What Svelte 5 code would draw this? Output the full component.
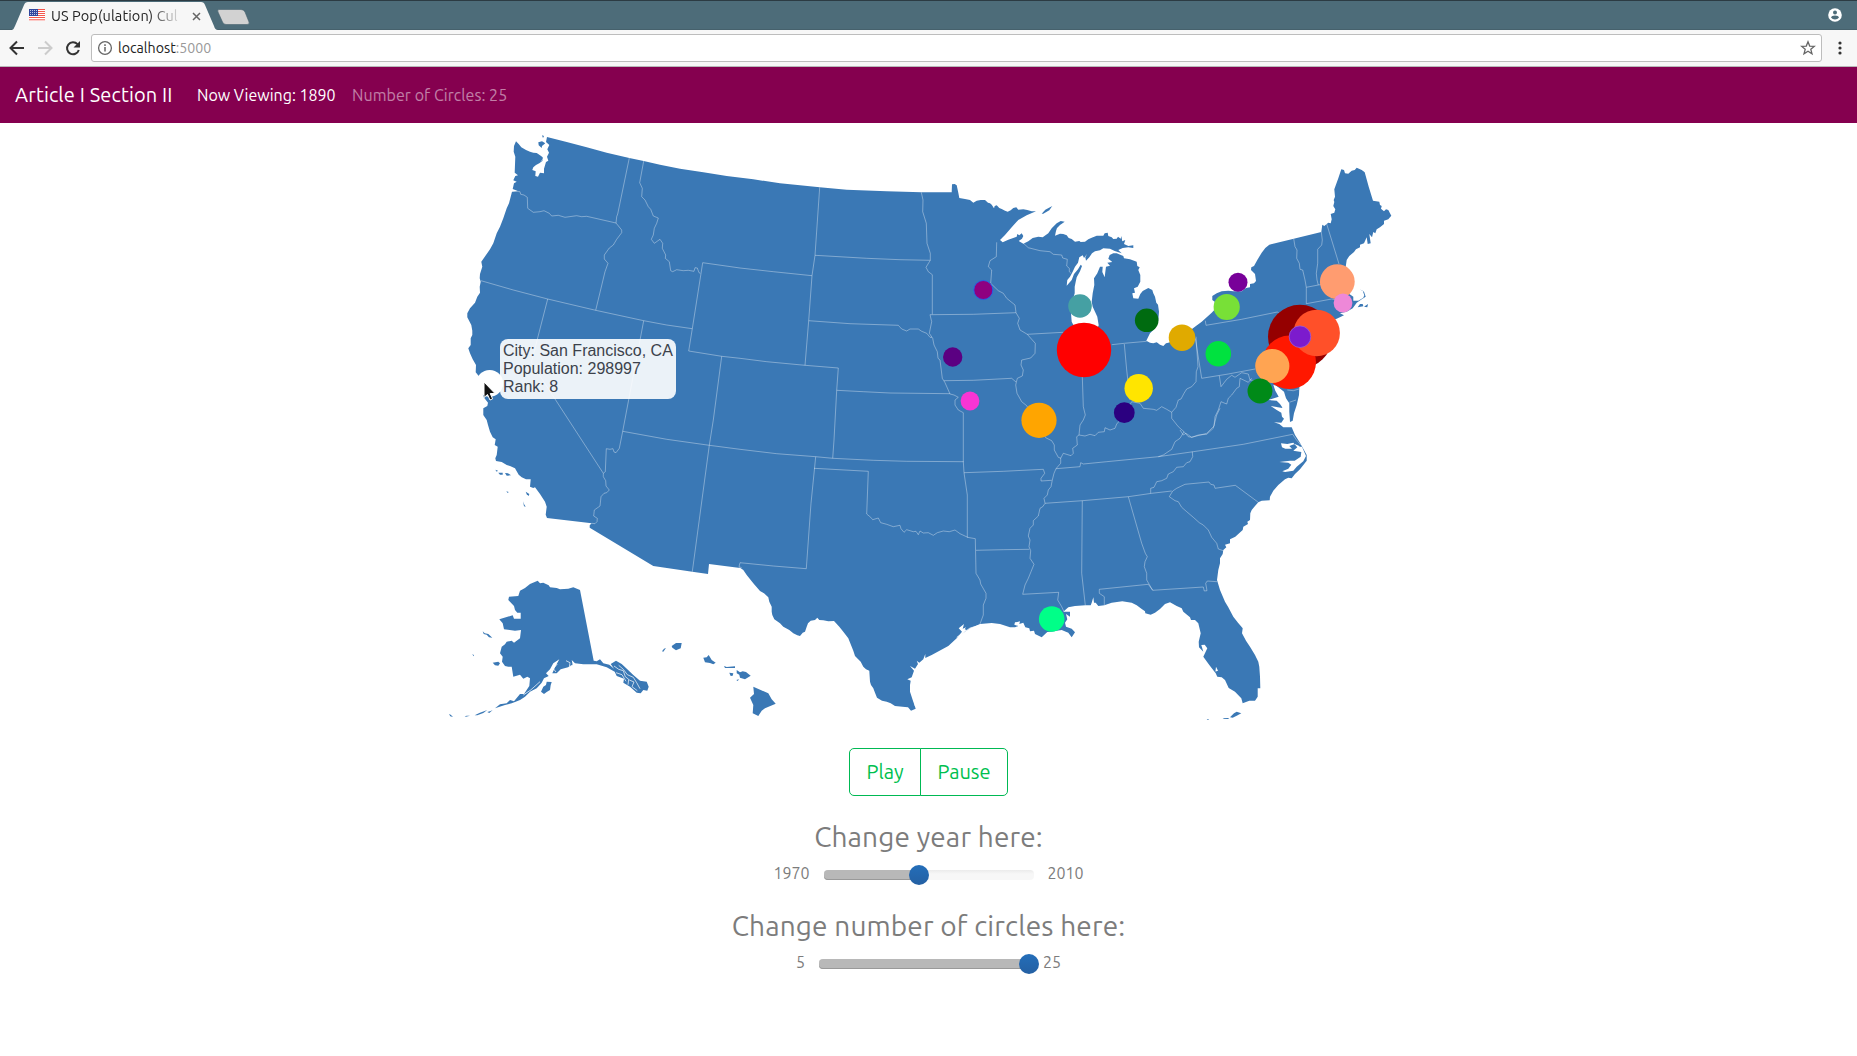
<script>
  // Each survey sheet has its own origin; three sheet units make one map unit.
  const sheets = {
    A: [440, 120],
    C: [440, 380],
    D: [740, 140],
    E: [740, 430],
    F: [960, 170],
    G: [1180, 150],
    H: [960, 430],
    K: [540, 640]
  };

  // "A x,y x,y D x,y ..." -> polyline path in map units
  function trace(text) {
    let origin = sheets.A;
    let d = '';
    for (const token of text.trim().split(/\s+/)) {
      if (sheets[token]) {
        origin = sheets[token];
        continue;
      }
      const [x, y] = token.split(',').map(Number);
      d += (d ? 'L' : 'M') + (origin[0] + x / 3).toFixed(1) + ' ' + (origin[1] + y / 3).toFixed(1);
    }
    return d;
  }

  const mainland = `A 228,64 236,72 244,82 258,90 270,95 280,98 290,99 300,106 308,112 308,122 298,130 288,135 280,142 277,150
    287,154 286,168 294,170 300,158 312,160 312,146 318,126 325,122 321,110 327,98 322,88 328,75 318,66 321,51
    380,66 440,82 500,98 568,114 611,123 660,134 720,146 790,157 860,168 940,178
    D 120,130 180,136 239,142 320,149 440,154 544,157 635,157 636,133 644,132 650,136 655,158 658,174 675,177 690,180 700,188
    710,182 722,180 735,180 744,188 750,190 755,194 762,205 764,198 770,196 778,204 785,207 795,212 803,215 812,211 820,204
    829,202 835,209 850,208 862,210 875,214 888,214 860,226 835,240 815,262 795,285 780,300 788,307 805,299 830,290 832,282
    838,286 845,280 850,288 846,296 836,303 850,311 865,304 878,294 895,290
    F 248,202 265,190 275,175 290,160 302,153 314,155 300,165 291,174 288,183 285,197 300,191 310,192 320,196 326,204 335,207
    345,215 358,213 362,216 375,215 385,208 395,203 410,197 430,197 434,190 443,188 445,198 455,202 460,207 470,206 474,200
    482,206 484,198 487,214 496,210 492,222 505,228 520,226 520,234 505,232 488,234 475,240 485,250 464,243 450,236 430,235
    420,241 405,244 396,250 388,262 378,272 376,262 381,252 372,264 368,256 358,262 354,278 345,290 338,305 330,320 322,330
    320,347 335,330 342,312 354,298 362,284 366,288 360,304 350,322 347,335 344,350 344,370 335,400 333,430 335,455 345,475
    370,485 410,480 416,466 412,440 405,425 398,410 395,395 398,370 403,345 402,325 412,310 420,290 428,290 427,306 434,322
    436,306 438,290 450,287 442,278 457,276 445,266 449,255 460,250 470,250 490,258 492,265 510,268 530,275 532,288 539,292
    535,300 541,315 541,335 533,350 522,355 525,368 517,370 520,385 535,386 541,372 548,363 565,354 577,360 580,370 585,380
    589,398 594,404 597,425 595,450 585,475 570,490 559,512 570,518 580,520 590,517 600,524 610,528 618,520 625,518 650,510
    680,490 700,474 725,455 755,428
    G 105,478 104,455 97,450 97,438 110,430 125,424 145,422 160,424 185,424 198,414 210,412 210,402 222,400 228,393 225,372
    213,360 214,352 222,348 232,330 245,308 256,294 268,284 341,266 424,246 427,224 433,228 440,222 445,218 452,220 455,208
    452,192 463,188 466,178 460,168 463,156 461,150 465,140 463,118 475,85 484,58 492,60 495,70 505,71 515,62 524,60 530,53
    545,60 554,67 566,110 579,152 598,155 600,165 605,168 603,176 612,184 618,178 625,180 634,197 625,208 612,212 612,222
    600,232 590,238 586,250 580,246 576,262 568,252 572,280 563,282 560,262 552,280 540,284 540,292 528,298 522,306 508,318
    500,330 497,350 510,380 515,400 505,430 520,440 520,452 535,452 550,443 553,436 548,422 538,418 552,425 557,440 545,448
    530,458 518,475 500,485 480,490 492,496 470,506 440,516 400,560 390,620 360,680 358,715 357,735 350,765 342,790
    338,812 330,816 328,785 328,760 318,745 312,725 295,712 280,704 286,722 296,740 264,750 290,752 300,762 308,774 272,768
    290,780 304,788 306,800 312,806 304,818 282,817 298,822 310,832 335,832 345,855 358,875 372,900
    H 1040,75 1040,92 1020,118 1005,132 995,145 985,143 975,148 955,165 940,182 930,200 929,211 905,212 895,217 885,228
    875,240 871,250 870,270 862,275 864,282 850,290 848,300 835,312 826,320 810,328 810,340 795,344 799,352 790,360 788,372
    780,385 780,400 775,420 771,450 780,480 795,515 805,532 820,560 834,578 848,595 846,610 858,632 870,650 885,675 895,695
    898,710 900,740 901,775 893,775 893,800 885,812 868,812 848,820 844,805 825,785 806,774 795,750 785,742 772,740 765,725 774,722
    768,710 766,728 748,705 730,680 742,655 734,644 724,645 730,665 717,652 716,635 722,610 715,580 705,570 693,570 690,562
    670,545 665,535 650,528 630,517 615,522 600,537 585,548 572,554 556,550 555,544 545,537 530,526 515,518 487,514 455,518
    433,526 415,528 407,518 402,518 400,502 395,518 392,526 376,526 345,528 325,532 310,545 330,545 330,560 318,552 322,568
    315,578 318,590 335,596 345,607 335,622 325,608 305,600 290,602 275,605 262,606 245,622 225,612 222,602 210,604 208,595
    196,592 190,578 178,582 180,574 172,576 165,577 163,584 175,588 165,592 150,592 120,582 95,579 60,582 30,595 5,612
    E 680,600 674,598 678,592 668,596 672,582 656,595 666,605 650,625 625,648 575,675 556,684 556,672 550,688 538,698 530,692
    534,702 525,716 510,708 522,722 515,742 502,748 512,752 510,765 510,785 518,810 527,836 513,842 504,832 495,831 465,828
    452,820 440,815 426,812 411,803 405,788 400,775 393,765 390,755 388,722 378,718 370,710 362,695 345,678 340,662 335,650
    325,625 310,605 298,590 282,573 265,574 250,571 238,570 232,563 225,570 212,572 204,580 200,590 195,605 188,608 180,618
    172,616 160,610 148,600 130,590 120,580 103,568 97,555 95,545 95,530 88,515 85,502 72,490 60,483 40,460 20,435 10,420 0,413
    C 895,563 807,552 804,582 757,575 640,558 449,443 449,436 455,430 321,414 317,404 320,380 315,365 300,342 285,322 280,324
    270,320 272,298 258,298 245,292 236,284 225,265 210,258 200,255 185,246 168,243 166,235 170,225 173,200 164,195 167,178
    158,172 150,155 144,135 140,120 130,105 130,85 142,78 144,68 130,50
    A 118,770 107,757 108,735 98,718 90,700 85,685 92,675 92,655 97,645 97,632 94,615 82,592 82,580 90,565 105,548 112,530
    120,518 119,500 122,485 119,475 120,462 127,440 124,425 136,408 150,388 160,370 170,340 180,320 190,295 200,265 207,250
    216,215 233,213 218,207 222,190 230,185 220,181 222,176 226,168 234,166 224,158 226,110 221,95 222,78 228,64`;

  const islands = [
    // Alaska
    `C 293,602 300,610 310,608 326,616 330,622 350,624 360,628 385,626 400,622 420,630 461,842 470,844 480,838 490,850
     508,854 522,866 512,852 528,842 545,852 562,868 580,885 600,902 620,905 626,920 622,932 610,930 602,940 590,938
     570,920 550,908 552,896 530,888 524,875 500,862 470,853 430,853 405,850 395,840 398,855 384,862 362,868 350,880
     337,880 345,862 358,838 340,850 330,868 318,880 326,888 312,895 305,908 290,925 270,935 255,950 240,960 225,966
     215,970 195,975 165,985 180,973 200,970 210,960 222,964 240,942 252,942 268,918 270,895 262,890 250,896 240,884
     220,890 215,860 205,860 195,858 186,845 188,830 180,820 185,800 195,793 200,785 215,782 222,788 240,775 243,750
     225,752 192,748 188,730 178,718 218,706 222,716 242,716 242,698 232,698 225,690 222,678 205,660 207,650 235,648
     240,632 255,624 270,612`,
    'C 303,935 310,920 318,915 320,905 335,906 332,915 330,930 320,936 312,942',
    'C 104,1006 118,999 142,990 130,999 112,1006',
    'C 142,996 152,993 158,990 148,999',
    'C 27,1002 32,1004 39,1011 31,1009',
    'C 74,1009 80,1007 90,1007 78,1010',
    'C 128,754 134,760 145,762 157,773 147,772 140,764 131,762',
    'C 158,848 175,845 180,850 175,857 165,856',
    'C 96,823 102,825 102,829',
    // Hawaii
    'C 695,798 708,789 725,789 722,805 708,811 697,803',
    'C 666,814 672,806 678,804 670,815',
    'C 790,833 800,832 806,825 815,840 827,848 820,853 810,849 795,847',
    'C 852,858 860,861 885,859 885,864 855,864',
    'C 868,878 880,880 878,887 872,888',
    'C 890,870 900,877 908,874 918,876 932,887 915,898 900,893 898,884 890,880',
    'C 889,900 897,898 893,903',
    'E 40,770 62,780 85,790 95,808 107,821 75,835 65,842 55,858 38,850 40,825 30,803 42,792',
    // Channel Islands
    'C 166,269 174,272 170,275',
    'C 175,278 188,278 188,284 180,284',
    'C 195,279 204,280 213,286 200,287',
    'C 257,335 268,342 266,348 260,343',
    'C 199,334 206,336 203,339',
    'C 249,364 252,372 257,380 252,379',
    // Puget Sound, Isle Royale, Keys, New England
    'A 295,67 306,64 316,70 306,78 305,84 296,76',
    'A 306,46 312,48 309,54',
    'F 245,131 256,119 277,108 268,121 250,131',
    'H 810,862 822,850 830,845 844,850 830,857 818,863',
    'H 788,865 804,864 808,867 792,867',
    'H 740,867 747,867 744,870',
    'G 533,472 540,462 548,462 550,469',
    'G 552,470 564,462 562,472'
  ];

  const inlets = [
    'H 963,40 966,52 976,56 996,56 988,48 1004,42 1018,48 1024,62 1018,50 1026,50 1038,78 1030,94 1010,110 1000,122 975,126 967,124 985,116 994,104 985,98 958,96 990,92 1004,92 1022,80 1024,66 1000,62 1012,52 1000,38 982,42',
    'G 283,704 290,722 300,740 312,748 305,730 292,710'
  ];

  const spits = [
    'E 518,745 514,775 520,800 526,828',
    'E 650,622 690,594 720,586',
    'K 222,78 236,88 250,92 256,110 266,118 264,134',
    'K 236,76 250,88 262,104 280,112 290,128 300,146',
    'K 228,98 246,104 258,124',
    'K 268,120 282,126 276,140 292,152',
    'K 78,62 90,68 88,80 100,74',
    'K 48,96 40,86 52,72',
    'C 250,945 272,930 300,905',
    'A 316,66 318,82 310,94 318,108 304,124',
    'A 308,90 296,86'
  ];

  const borders = [
    'A 216,213 240,215 242,223 252,225 262,232 263,265 280,277 300,275 312,272 328,280 335,288 355,286 375,292 410,287 425,290 440,289 528,309',
    'A 568,114 533,282 530,290 528,309 545,330 545,338 530,358 520,375 508,384 493,405 493,417 504,430 495,455 467,571',
    'A 611,123 599,188 607,205 605,230 615,240 625,260 632,268 640,288 655,294 650,310 643,325 640,345 634,358 643,370 660,358 668,370 667,385 677,405 676,415 688,425 692,452 698,455 710,449 730,452 745,451 762,454 765,443 772,444 777,458 781,460',
    'A 757,626 788,428 D 0,384 100,395 216,407',
    'A 123,482 220,510 323,537 467,571 611,602 680,615 757,626 746,693 845,709 D 0,655 80,665 195,676 295,684',
    'A 323,537 274,728 C 345,57 490,280',
    'A 611,602 C 548,154 538,205 528,218 522,216 519,206 510,208 499,206 496,275 490,280 490,290 497,302 498,318 508,330 500,338 492,340 483,350 480,378 463,390 461,408 472,415 471,425 465,431 455,430',
    'A 845,709 820,900 C 808,196 757,575',
    'C 548,154 680,178 808,196 E 0,58 110,71 227,80 278,85 400,91 500,94 670,95',
    'C 905,563 897,560 900,548 E 100,408 199,416 213,220 227,80',
    'D 239,142 225,346 216,407 206,542 195,676',
    'D 225,346 380,355 480,359 571,361',
    'D 206,542 330,551 475,556 485,567 500,573 510,567 535,567 545,574 560,580 570,592 576,592',
    'D 544,157 549,180 548,215 559,250 561,310 571,340 571,361 558,382 565,395 577,404 577,523',
    'D 570,524 700,523 828,518',
    'D 570,524 575,545 568,580 578,595 582,615 592,635 594,655 600,660 607,715 615,728 630,762 642,765 655,772 645,780 645,795 655,810 670,818 670,900 E 670,95',
    'D 290,751 370,755 450,759 630,761',
    'D 295,684 290,751 282,900 E 278,85',
    'D 612,722 700,721 815,715 828,726',
    'D 770,307 769,350 750,362 745,380 755,390 752,430 775,452 790,460 800,475 825,495 828,518 838,535 833,550 840,570 862,583 875,598 886,610 885,640 872,654 845,660 843,675 850,690 847,708 832,715 827,735 831,760 845,785 F 200,707 257,803 275,812 283,825 283,840 295,862 303,865',
    'D 862,583 F 310,487',
    'F 185,215 205,233 240,242 270,245 280,253 305,255 308,264 322,268 320,288 328,295 328,305 333,310',
    'F 367,620 370,710 376,735 370,750 360,765 357,795 350,800 352,825 338,835 340,850 333,857 310,850 302,865',
    'F 357,795 375,798 390,793 405,797 415,787 433,785 435,773 450,780 465,775 470,762 490,740 515,695 540,700 550,715 580,718 590,721 605,710 620,718 635,727 648,712 655,690 663,687 672,670 680,657 695,650 708,635 709,605 714,590 708,500',
    'F 493,522 500,600 510,690',
    'F 455,524 493,520 560,514',
    'G 46,565 65,685 145,672 225,657',
    'F 635,727 635,745 655,770 672,785 660,805 645,815 635,838 610,855 595,860',
    'F 672,785 685,800 695,802 715,795 740,793 760,775 770,735 780,715',
    'G 0,840 10,855 18,850 35,862 80,850 102,828 105,800 115,780 123,755 140,762 145,745 155,735 170,715 178,710 180,685 205,697 215,685',
    'G 118,677 123,710 140,688 155,676 165,682 185,668 205,672 210,690 225,692',
    'G 76,512 78,526 185,508 292,486 300,492',
    'G 341,266 345,290 351,300 350,325 358,340 360,358 368,360 375,390 379,412 379,461 455,447 470,450',
    'G 379,412 420,404 435,398',
    'G 424,246 427,270 425,285 413,298 413,340 409,370 411,390 415,405',
    'G 440,222 477,342',
    'G 322,720 340,722 357,717',
    'G 328,757 348,750',
    'H 288,116 360,110 362,98 370,102 440,95 595,80 700,65 850,43 998,13 1008,28 1022,45',
    'H 255,220 367,212 505,200 575,190 635,183',
    'H 697,65 698,80 690,95 680,98 670,110 650,112 640,125 625,132 620,145 605,152 590,155 582,172 572,175 572,190',
    'H 638,183 650,175 675,163 747,156 752,163 762,165 765,175 826,166 895,217',
    'H 638,183 628,200 645,212 655,215 665,232 680,245 700,262 718,278 730,285 745,300 755,322 770,340 775,357 790,362',
    'H 505,200 525,270 545,340 556,370 562,380 555,395 553,410 560,430 560,450 578,481',
    'H 433,526 433,500 418,490 418,478 565,463 578,481 730,471 733,483 741,482 737,460 742,453 771,455',
    'H 367,212 365,430 376,526',
    'H 312,545 305,530 293,510 296,487 188,493 195,465 205,445 213,425 222,403 210,385 212,362 207,350 210,330 205,318 210,295 220,285 220,272 235,258 240,235 248,230 255,220 252,205 262,195 265,180 273,170 277,150 282,130 288,116 302,100 302,85',
    'H 12,128 130,124 250,118 254,130 243,145 243,153 275,151',
    'H 48,361 130,359 208,358',
    'H 10,94 12,128 22,195 22,322 46,326 48,430 60,450 62,462 78,490 78,505 70,525 70,555 60,582',
    'E 222,115 385,124 380,252 392,262 398,269 415,264 422,278 440,283 460,290 480,286 483,296 492,307 500,299 520,305 528,304 535,314 540,303 550,309 565,308 580,316 592,308 610,303 628,305 645,300 660,311 683,322'
  ];

  const cities = [
    [1300, 336.7, 32, '#950000'],
    [1084, 350, 27.2, '#ff0000'],
    [1289.3, 362.3, 26.7, '#ff1800'],
    [1316.7, 333, 23.2, '#ff5029'],
    [1039, 420.3, 17.6, '#ffa500'],
    [1337.3, 281.7, 17.4, '#ff9c70'],
    [1272.3, 366, 17.1, '#ffa452'],
    [489.7, 383.3, 13.4, '#ffffff'],
    [1138.7, 388.3, 14.2, '#ffe500'],
    [1182, 337.7, 13.3, '#e0aa00'],
    [1226.7, 307, 13.1, '#78e037'],
    [1051.7, 619, 12.8, '#00ff88'],
    [1218.3, 353.7, 12.8, '#00e23f'],
    [1260, 391, 12.5, '#008a18'],
    [1146.7, 320.3, 11.8, '#006b10'],
    [1080, 306, 11.8, '#45a0a3'],
    [1300, 336.7, 10.8, '#7c1bcd', '#9a5fd8'],
    [983.3, 290, 9.5, '#8e0080', '#1c63f5'],
    [1124.3, 412.7, 10.4, '#2b0080'],
    [952.7, 357, 9.7, '#5b0082'],
    [1238, 282.3, 9.5, '#780099'],
    [970, 401, 9.4, '#f835d4'],
    [1343, 303, 9.4, '#ee88d8']
  ];

  const sliders = [
    { title: 'Change year here:', low: '1970', high: '2010', fill: 45.5, kind: 'year' },
    { title: 'Change number of circles here:', low: '5', high: '25', fill: 100, kind: 'count' }
  ];
</script>

<div class="window">
  <header class="tabs">
    <div class="tab">
      <svg class="tab-shape" width="206" height="28" viewBox="0 0 206 28"><path d="M0 28Q2 27 3 24L12 3Q13 0 16 0H189Q192 0 193 3L202 24Q203 28 206 28Z" fill="#f7f7f7" /></svg>
      <svg class="flag" width="16" height="12" viewBox="0 0 16 12">
        <path d="M0 0H16V12H0Z" fill="#fff" />
        <path d="M0 .5H16M0 2.5H16M0 4.5H16M0 6.5H16M0 8.5H16M0 10.8H16" stroke="#f4564c" stroke-width="1" />
        <path d="M0 0H9V7H0Z" fill="#31479e" />
        <path d="M1 1.5H9M1 3.5H9M1 5.5H9" stroke="#dfe4f6" stroke-width=".8" stroke-dasharray="1 1" />
      </svg>
      <span class="tab-title">US Pop(ulation) Cul</span>
      <svg class="close" width="9" height="9" viewBox="0 0 9 9"><path d="M1 1L8 8M8 1L1 8" stroke="#666" stroke-width="1.5" /></svg>
    </div>
    <svg class="new-tab" width="34" height="16" viewBox="0 0 34 16"><path d="M2 .5H24Q27 .5 28 3L32 13Q33 15.500 30 15.500H9Q6.500 15.500 5.500 13L1 3Q0 .5 2 .5Z" fill="#d2d2d2" stroke="#46616d" stroke-width=".6" /></svg>
    <svg class="account" width="14" height="14" viewBox="0 0 14 14">
      <circle cx="7" cy="7" r="6.800" fill="#fff" />
      <circle cx="7" cy="4.400" r="2" fill="#4d6c79" />
      <path d="M3 9.600Q3.500 7.600 7 7.600T11 9.600Q9.500 11.600 7 11.600T3 9.600Z" fill="#4d6c79" />
    </svg>
  </header>

  <div class="toolbar">
    <svg class="nav-icons" width="74" height="18" viewBox="0 0 74 18" fill="none">
      <path d="M17 9H4M10 2.500L3.500 9L10 15.500" stroke="#333" stroke-width="2" />
      <path d="M31 9H44M38 2.500L44.500 9L38 15.500" stroke="#ccc" stroke-width="2" />
      <path d="M70.500 5.200A6 6 0 1 0 71.800 11" stroke="#333" stroke-width="2" />
      <path d="M73 2V8.500H66.500Z" fill="#333" />
    </svg>
    <div class="omnibox">
      <svg width="16" height="16" viewBox="0 0 16 16" fill="none"><circle cx="8" cy="8" r="6.400" stroke="#666" stroke-width="1.300" /><path d="M8 7V11.500M8 4.300V5.900" stroke="#666" stroke-width="1.500" /></svg>
      <span class="url">localhost<i>:5000</i></span>
      <svg class="star" width="16" height="16" viewBox="0 0 16 16"><path d="M8 1.800L9.700 6.100L14.300 6.400L10.800 9.300L12 13.800L8 11.300L4 13.800L5.200 9.300L1.700 6.400L6.300 6.100Z" fill="none" stroke="#666" stroke-width="1.300" /></svg>
    </div>
    <svg class="dots" width="4" height="14" viewBox="0 0 4 14" fill="#333"><circle cx="2" cy="2" r="1.600" /><circle cx="2" cy="7" r="1.600" /><circle cx="2" cy="12" r="1.600" /></svg>
  </div>

  <nav class="navbar">
    <span class="brand">Article I Section II</span>
    <span class="viewing">Now Viewing: 1890</span>
    <span class="circles">Number of Circles: 25</span>
  </nav>

  <main>
    <div class="map">
      <svg width="960" height="600" viewBox="449 123 960 600">
        <path class="land" d={trace(mainland) + 'Z'} />
        {#each islands as island}
          <path class="land" d={trace(island) + 'Z'} />
        {/each}
        {#each inlets as inlet}
          <path class="water" d={trace(inlet) + 'Z'} />
        {/each}
        {#each spits as spit}
          <path class="spit" d={trace(spit)} />
        {/each}
        {#each borders as border}
          <path class="border" d={trace(border)} />
        {/each}
        {#each cities as [cx, cy, r, fill, ring]}
          <circle {cx} {cy} {r} {fill} stroke={ring ?? 'none'} stroke-width=".8" />
        {/each}
      </svg>
      <div class="tooltip">City: San Francisco, CA<br />Population: 298997<br />Rank: 8</div>
      <svg class="cursor" width="14" height="22" viewBox="0 0 14 22"><path d="M1 1V16.500L4.500 13.500L7 19L9.600 17.800L7.200 12.500H12Z" fill="#111" stroke="#fff" stroke-width="1" /></svg>
    </div>

    <div class="buttons">
      <button class="play">Play</button>
      <button class="pause">Pause</button>
    </div>

    {#each sliders as s}
      <section class={s.kind}>
        <h3>{s.title}</h3>
        <div class="row">
          <span class="low">{s.low}</span>
          <div class="track">
            <div class="fill" style="width: {s.fill}%"></div>
            <div class="thumb" style="left: {s.fill}%"></div>
          </div>
          <span class="high">{s.high}</span>
        </div>
      </section>
    {/each}
  </main>
</div>

<style>
  :global(body) {
    margin: 0;
    background: #fff;
  }
  .window {
    height: 1056px;
    overflow: hidden;
    font-family: Ubuntu, 'Noto Sans', sans-serif;
  }
  svg {
    display: block;
    flex: none;
  }
  .tabs {
    box-sizing: border-box;
    height: 30px;
    display: flex;
    align-items: flex-start;
    padding: 1px 15px 0 12px;
    border-top: 1px solid #2c3b43;
    background: #4d6c79;
    box-shadow: inset 0 -1px #46616c;
  }
  .tab {
    position: relative;
    display: flex;
    align-items: center;
    width: 206px;
    height: 28px;
    box-sizing: border-box;
    padding-left: 17px;
  }
  .tab-shape {
    position: absolute;
    left: 0;
    top: 0;
  }
  .flag {
    position: relative;
    margin: -3px 6px 0 0;
  }
  .tab-title {
    position: relative;
    width: 133px;
    overflow: hidden;
    white-space: nowrap;
    font-size: 14.5px;
    line-height: 20px;
    letter-spacing: 0.1px;
    color: #222;
    mask-image: linear-gradient(90deg, #000 74%, transparent 99%);
  }
  .close {
    position: relative;
    margin-left: 8px;
  }
  .new-tab {
    margin: 7px 0 0 -1px;
  }
  .account {
    margin: 6px 0 0 auto;
  }
  .toolbar {
    box-sizing: border-box;
    height: 37px;
    display: flex;
    align-items: center;
    padding: 0 15px 1px 7px;
    background: #f7f7f7;
    border-bottom: 1px solid #b8b8b8;
  }
  .omnibox {
    box-sizing: border-box;
    flex: 1;
    height: 28px;
    margin: 0 16px 0 10px;
    display: flex;
    align-items: center;
    padding: 0 5px;
    border: 1px solid #bdbdbd;
    border-radius: 3px;
    background: #fff;
  }
  .url {
    margin-left: 5px;
    font-size: 14.2px;
    line-height: 18px;
    color: #222;
  }
  .url i {
    font-style: normal;
    color: #999;
  }
  .star {
    margin-left: auto;
  }
  .navbar {
    height: 56px;
    box-sizing: border-box;
    display: flex;
    align-items: center;
    padding: 0 0 1px 15px;
    background: #85004f;
    color: #fff;
    white-space: nowrap;
  }
  .brand {
    width: 182px;
    font-size: 20px;
    letter-spacing: 0.15px;
  }
  .viewing {
    width: 155px;
    font-size: 16px;
  }
  .circles {
    font-size: 16px;
    letter-spacing: 0.05px;
    color: rgba(255, 255, 255, 0.5);
  }
  main {
    display: flex;
    flex-direction: column;
    align-items: center;
  }
  .map {
    position: relative;
    height: 600px;
  }
  .land {
    fill: #3a78b5;
  }
  .water {
    fill: #fff;
  }
  .spit {
    fill: none;
    stroke: #fff;
    stroke-width: 0.7;
  }
  .border {
    fill: none;
    stroke: #fff;
    stroke-opacity: 0.45;
    stroke-width: 0.8;
    stroke-linejoin: round;
  }
  .tooltip {
    position: absolute;
    left: 51px;
    top: 216px;
    box-sizing: border-box;
    width: 176px;
    height: 60px;
    padding: 3px 3px 3px 3.5px;
    border-radius: 8px;
    background: rgba(255, 255, 255, 0.9);
    color: #3c424c;
    font: 16px/18px 'Liberation Sans', sans-serif;
    white-space: nowrap;
  }
  .cursor {
    position: absolute;
    left: 34.5px;
    top: 258px;
  }
  .buttons {
    display: flex;
    margin-top: 25px;
  }
  button {
    box-sizing: border-box;
    height: 48px;
    padding: 0 0 2px;
    border: 1px solid #00b954;
    background: #fff;
    color: #00bf4f;
    font: 20px Ubuntu, 'Noto Sans', sans-serif;
  }
  .play {
    width: 72px;
    border-radius: 5px 0 0 5px;
  }
  .pause {
    width: 88px;
    margin-left: -1px;
    border-radius: 0 5px 5px 0;
  }
  section {
    height: 89px;
  }
  .year {
    margin-top: 24px;
  }
  h3 {
    margin: 0;
    height: 34px;
    text-align: center;
    font-size: 28px;
    line-height: 34px;
    letter-spacing: 0.15px;
    font-weight: 400;
    color: #7c7c7c;
    white-space: nowrap;
  }
  .row {
    display: flex;
    justify-content: center;
    align-items: center;
    height: 22px;
    margin-top: 10px;
    color: #7c7c7c;
    font-size: 16px;
    line-height: 18px;
  }
  .row span {
    margin-top: -4px;
  }
  .track {
    position: relative;
    width: 210px;
    height: 10px;
    margin: 0 14px;
    border-radius: 4px;
    background: linear-gradient(#ebebeb, #f7f7f7 40%);
  }
  .fill {
    height: 10px;
    border-radius: 4px;
    background: #b8b8b8;
    box-shadow: inset 0 -1px #999;
  }
  .thumb {
    position: absolute;
    top: -5px;
    width: 20px;
    height: 20px;
    margin-left: -10px;
    border-radius: 50%;
    background: linear-gradient(#246eb9, #2460a3);
  }
</style>
